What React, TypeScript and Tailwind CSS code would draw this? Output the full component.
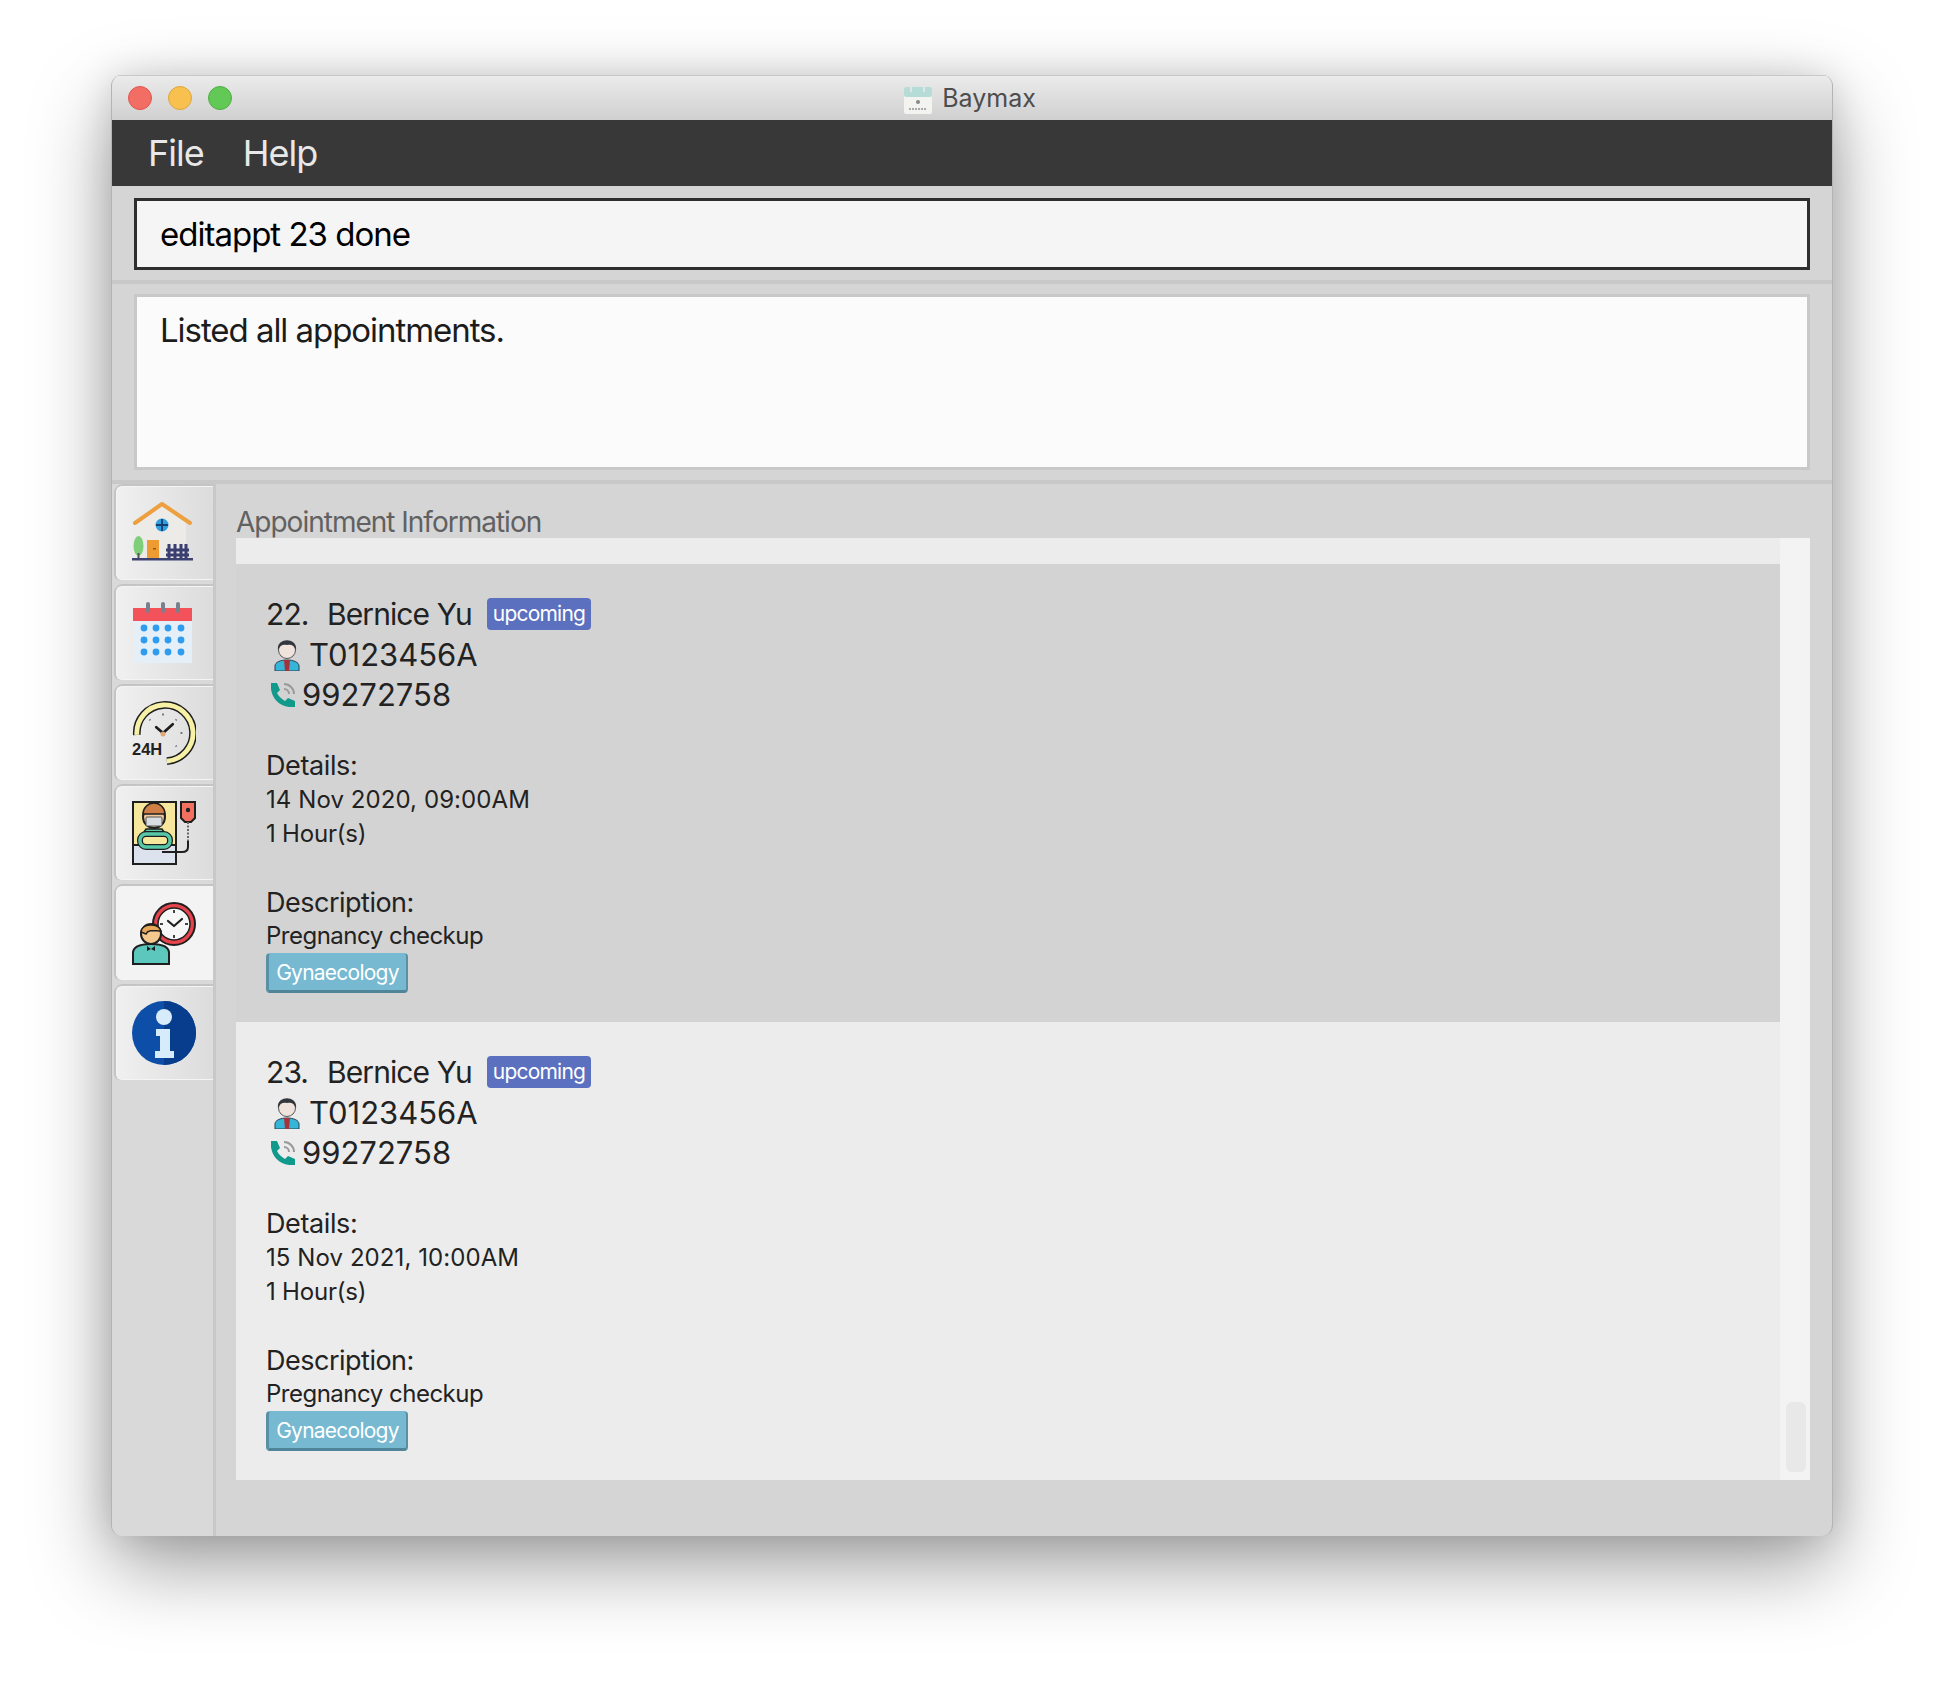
import React from 'react';

const HomeIcon = () => (
  <svg width="64" height="64" viewBox="0 0 64 64">
    <path d="M7 22 L30 4 L54 22 L54 58 L7 58 Z" fill="#ecebe8" />
    <path d="M3 22 L30 3 L58 22" fill="none" stroke="#eda040" strokeWidth="4" strokeLinecap="round" strokeLinejoin="round" />
    <circle cx="30" cy="24" r="6.5" fill="#2f9fe0" />
    <path d="M30 18 V30 M24 24 H36" stroke="#173f6e" strokeWidth="1.8" />
    <rect x="15" y="39" width="12" height="19" fill="#ee9c32" />
    <rect x="21" y="47" width="3" height="1.5" fill="#8a5a1c" />
    <ellipse cx="6.5" cy="45" rx="5" ry="10" fill="#7fcf7a" />
    <rect x="5.5" y="52" width="2" height="6" fill="#555" />
    <path d="M37 43 V58 M43 43 V58 M49 43 V58 M54 43 V58 M34 49 H57 M34 54 H57" stroke="#3a3f70" strokeWidth="3" fill="none" />
    <rect x="0" y="57" width="61" height="2.5" fill="#3e4270" />
  </svg>
);

const CalendarIcon = () => (
  <svg width="64" height="64" viewBox="0 0 64 64">
    <rect x="1" y="14" width="59" height="48" fill="#e4eff7" />
    <rect x="1" y="7" width="59" height="13" fill="#f4525a" />
    <rect x="14" y="1" width="4" height="11" rx="2" fill="#77808c" />
    <rect x="29" y="1" width="4" height="11" rx="2" fill="#77808c" />
    <rect x="44" y="1" width="4" height="11" rx="2" fill="#77808c" />
    {[27, 39, 51].map((y) =>
      [12, 24, 36, 49].map((x) => <circle key={`${x}-${y}`} cx={x} cy={y} r="3.4" fill="#2f9cf0" />)
    )}
  </svg>
);

const ClockIcon = () => (
  <svg width="64" height="64" viewBox="0 0 66 66">
    <path d="M5 35 A29 29 0 1 1 36 62" fill="none" stroke="#1d1d1d" strokeWidth="8" />
    <path d="M5 35 A29 29 0 1 1 36 62" fill="none" stroke="#f7f1a6" strokeWidth="5" />
    <path d="M32 33 L25 27 M32 33 L42 24" stroke="#1d1d1d" strokeWidth="2.8" strokeLinecap="round" />
    <circle cx="32" cy="34" r="2.6" fill="#e0a878" />
    <path d="M32 13 V15 M18 19 L19 20 M46 19 L45 20 M52 33 H50 M46 47 L45 46" stroke="#777" strokeWidth="2" />
    <text x="0" y="56" fontFamily="'Liberation Sans',sans-serif" fontSize="17" fontWeight="700" fill="#222">24H</text>
  </svg>
);

const PatientIcon = () => (
  <svg width="64" height="64" viewBox="0 0 64 64">
    <rect x="1" y="1" width="43" height="62" fill="#f6e79c" stroke="#1f1f1f" strokeWidth="2" />
    <rect x="1" y="44" width="43" height="19" fill="#dde3ee" stroke="#1f1f1f" strokeWidth="2" />
    <path d="M14 28 H30 L34 34 H10 Z" fill="#57c8a7" stroke="#1f1f1f" strokeWidth="1.5" />
    <rect x="8" y="33" width="30" height="13" rx="6" fill="none" stroke="#1f1f1f" strokeWidth="6" />
    <rect x="8" y="33" width="30" height="13" rx="6" fill="none" stroke="#57c8a7" strokeWidth="3.5" />
    <circle cx="22" cy="16" r="11" fill="#f1c99b" stroke="#1f1f1f" strokeWidth="2" />
    <path d="M11 13 A11 11 0 0 1 33 13 Z" fill="#cf7f45" stroke="#1f1f1f" strokeWidth="1.5" />
    <rect x="14" y="16" width="16" height="9" rx="1" fill="#d8dde2" stroke="#555" strokeWidth="1" />
    <path d="M49 1 H63 V17 L59 21 H53 L49 17 Z" fill="#f2705f" stroke="#1f1f1f" strokeWidth="2" />
    <circle cx="56" cy="9" r="2.2" fill="#222" />
    <path d="M56 21 V40" stroke="#666" strokeWidth="2" strokeDasharray="2 1.5" />
    <path d="M56 40 V46 Q56 51 50 51 H30" fill="none" stroke="#1f1f1f" strokeWidth="2" />
  </svg>
);

const DoctorClockIcon = () => (
  <svg width="64" height="64" viewBox="0 0 64 64">
    <circle cx="42" cy="23" r="21" fill="#e6444c" stroke="#1f1f1f" strokeWidth="2" />
    <circle cx="42" cy="23" r="16" fill="#f7f7f7" stroke="#1f1f1f" strokeWidth="1.5" />
    <path d="M42 25 L36 20 M42 25 L50 18" stroke="#1f1f1f" strokeWidth="2.2" strokeLinecap="round" />
    <path d="M42 9 V12 M42 34 V37 M28 23 H31 M53 23 H56" stroke="#444" strokeWidth="2" />
    <path d="M1 63 V52 C1 46 8 43 19 43 C30 43 37 46 37 52 V63 Z" fill="#5cc8bd" stroke="#1f1f1f" strokeWidth="2" />
    <circle cx="19" cy="33" r="10" fill="#f5c98e" stroke="#1f1f1f" strokeWidth="2" />
    <path d="M9 31 C10 22 26 22 29 30 C23 30 16 28 14 33 Z" fill="#e8a85a" stroke="#1f1f1f" strokeWidth="1.5" />
    <path d="M15 45 L19 48 L23 45 V50 L19 48 L15 50 Z" fill="#1f1f1f" />
  </svg>
);

const InfoIcon = () => (
  <svg width="64" height="64" viewBox="0 0 64 64">
    <circle cx="32" cy="32" r="32" fill="#0d4fa8" />
    <path d="M32 0 A32 32 0 0 1 32 64 Z" fill="#083c8c" />
    <circle cx="32" cy="16" r="8" fill="#d6ecfa" />
    <path d="M24 28 H38 V50 H42 V57 H23 V50 H28 V35 H24 Z" fill="#d6ecfa" />
  </svg>
);

const PersonIcon = () => (
  <svg width="26" height="32" viewBox="0 0 26 32">
    <path d="M1 32 V27 C1 23 7 21 13 21 C19 21 25 23 25 27 V32 Z" fill="#35b5d8" stroke="#2c3e50" strokeWidth="1" />
    <path d="M10 21 H16 L15 32 H11 Z" fill="#a8323a" />
    <circle cx="13" cy="11" r="8.5" fill="#f0e3db" stroke="#55585c" strokeWidth="1" />
    <path d="M4 11 C2 -2 24 -2 22 11 C20 6 17 5 13 6 C9 5 6 6 4 11 Z" fill="#33363b" />
  </svg>
);

const PhoneIcon = () => (
  <svg width="24" height="24" viewBox="0 0 24 24">
    <path d="M0 0 H6 L9 7 L6 10 C8 14 11 16 14 18 L17 15 L24 18 V24 H18 C8 23 1 15 0 6 Z" fill="#119a8c" />
    <path d="M13 1 A10 10 0 0 1 23 11 M13 6 A5 5 0 0 1 18 11" fill="none" stroke="#9a9a9a" strokeWidth="2" />
  </svg>
);

const tabs = [
  { icon: <HomeIcon />, active: false },
  { icon: <CalendarIcon />, active: false },
  { icon: <ClockIcon />, active: false },
  { icon: <PatientIcon />, active: false },
  { icon: <DoctorClockIcon />, active: true },
  { icon: <InfoIcon />, active: false },
];

const appointments = [
  { id: 22, date: '14 Nov 2020, 09:00AM', bg: 'bg-[#d3d3d3]' },
  { id: 23, date: '15 Nov 2021, 10:00AM', bg: 'bg-[#ececec]' },
];

function AppointmentCard({ id, date, bg }: { id: number; date: string; bg: string }) {
  return (
    <div className={`h-[458px] pl-[30px] pt-[32px] text-[#222222] ${bg}`}>
      <div className="flex h-[36px] items-center text-[30px] tracking-[-0.9px]">
        <span className="w-[61px]">{id}.</span>
        <span>Bernice Yu</span>
        <span className="ml-[15px] flex h-[32px] items-center rounded-[4px] bg-[#5b70bf] px-[6px] text-[21px] tracking-[-0.8px] text-white">
          upcoming
        </span>
      </div>
      <div className="ml-[8px] mt-[4px] flex h-[38px] items-center gap-[9px] text-[31px]">
        <PersonIcon />
        <span>T0123456A</span>
      </div>
      <div className="flex h-[42px] items-center gap-[7px] pl-[5px] text-[31px]">
        <PhoneIcon />
        <span>99272758</span>
      </div>
      <div className="mt-[33px] h-[34px] text-[27px] leading-[34px] tracking-[-0.4px]">Details:</div>
      <div className="h-[34px] text-[24px] leading-[34px] tracking-[0.08px]">{date}</div>
      <div className="h-[34px] text-[24px] leading-[34px] tracking-[-0.2px]">1 Hour(s)</div>
      <div className="mt-[35px] h-[33px] text-[27px] leading-[34px] tracking-[-0.5px]">Description:</div>
      <div className="h-[34px] text-[24px] leading-[33px] tracking-[-0.5px]">Pregnancy checkup</div>
      <div className="flex">
        <span className="flex h-[40px] w-[142px] items-center justify-center rounded-[4px] border-b-[3px] border-l-[3px] border-r-[2px] border-t-[1px] border-b-[#4f8499] border-l-[#5a90a6] border-r-[#5a90a6] border-t-[#76b9d1] bg-[#76b9d1] pt-[1px] text-[21px] tracking-[-0.75px] text-white">
          Gynaecology
        </span>
      </div>
    </div>
  );
}

export default function App() {
  return (
    <div className="min-h-[1684px] bg-white pl-[111px] pr-[111px] pt-[75px] font-['Inter','Liberation_Sans',sans-serif]">
      <div className="flex h-[1461px] w-[1722px] flex-col overflow-hidden rounded-[11px] border-x border-[#b4b4b4] bg-[#d5d5d5] shadow-[0_30px_80px_rgba(0,0,0,0.38),0_0_36px_rgba(0,0,0,0.12)]">
        {/* title bar */}
        <div className="relative flex h-[45px] shrink-0 items-center justify-center border-t border-[#c8c8c8] bg-gradient-to-b from-[#ebebeb] to-[#d0d0d0] pr-[4px] pt-[2px]">
          <div className="absolute left-[16px] top-[10px] flex gap-[16px]">
            <span className="h-[24px] w-[24px] rounded-full border border-[#e0564e] bg-[#f26d63]" />
            <span className="h-[24px] w-[24px] rounded-full border border-[#dea63c] bg-[#f8c14f]" />
            <span className="h-[24px] w-[24px] rounded-full border border-[#4fae45] bg-[#62c957]" />
          </div>
          <div className="flex items-center gap-[10px]">
            <svg width="28" height="30" viewBox="0 0 28 30">
              <rect x="0" y="3" width="28" height="27" rx="2" fill="#f3f3f0" />
              <rect x="0" y="3" width="28" height="10" rx="2" fill="#b5dcd6" />
              <path d="M7 0 V8 M20 0 V8" stroke="#e4e4e4" strokeWidth="2" />
              <circle cx="14" cy="18" r="2" fill="#888" />
              <path d="M5 25 H23" stroke="#aaa" strokeWidth="2" strokeDasharray="2 1" />
            </svg>
            <span className="text-[25px] text-[#4d4d4d]">Baymax</span>
          </div>
        </div>

        {/* menu */}
        <div className="flex h-[66px] shrink-0 items-center gap-[39px] bg-[#383838] pl-[36px] text-[36px] tracking-[-1px] text-[#e8e8e8]">
          <span>File</span>
          <span>Help</span>
        </div>

        {/* command box */}
        <div className="h-[98px] shrink-0 border-b-[4px] border-[#c8c8c8] pl-[22px] pr-[22px] pt-[12px]">
          <div className="flex h-[72px] items-center border-[3px] border-[#2e2e2e] bg-[#f5f5f5] pl-[23px] pt-[1px] text-[33px] tracking-[-1px] text-black">
            editappt 23 done
          </div>
        </div>

        {/* result display */}
        <div className="h-[200px] shrink-0 border-b-[4px] border-[#c8c8c8] pl-[22px] pr-[22px] pt-[10px]">
          <div className="h-[176px] border-[3px] border-[#c8c8c8] bg-[#fbfbfb] pl-[23px] pt-[11px] text-[33px] leading-[44px] tracking-[-1.05px] text-[#1c1c1c]">
            Listed all appointments.
          </div>
        </div>

        {/* body */}
        <div className="flex min-h-0 flex-1">
          <div className="flex w-[104px] shrink-0 flex-col gap-[6px] border-r-[3px] border-[#c8c8c8] bg-[#d9d9d9] pl-[4px] pt-[2px]">
            {tabs.map((tab, i) => (
              <div
                key={i}
                className={`flex h-[94px] w-[97px] items-center justify-center rounded-l-[6px] border border-r-0 border-[#f4f4f4] shadow-[0_-2px_0_#c4c4c4,-2px_0_0_#c4c4c4] ${
                  tab.active ? 'bg-[#f3f3f3]' : 'bg-gradient-to-r from-[#f0f0f0] to-[#dcdcdc]'
                }`}
              >
                <span className="-ml-[2px] flex">{tab.icon}</span>
              </div>
            ))}
          </div>

          <div className="min-w-0 flex-1 pl-[20px] pr-[22px]">
            <div className="h-[54px] pt-[20px] text-[28px] leading-[36px] tracking-[-1px] text-[#616161]">
              Appointment Information
            </div>
            <div className="flex h-[942px] bg-[#ececec]">
              <div className="min-w-0 flex-1 pt-[26px]">
                {appointments.map((a) => (
                  <AppointmentCard key={a.id} {...a} />
                ))}
              </div>
              <div className="flex w-[30px] shrink-0 flex-col justify-end bg-[#f3f3f3] pb-[8px] pl-[6px]">
                <div className="h-[70px] w-[20px] rounded-[6px] bg-[#e8e8e8]" />
              </div>
            </div>
          </div>
        </div>
      </div>
    </div>
  );
}
